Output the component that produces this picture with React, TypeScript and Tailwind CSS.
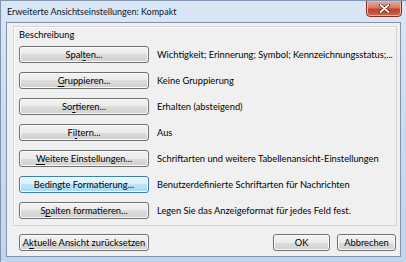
import React from 'react';

const rows: { label: React.ReactNode; desc: string; focus?: boolean }[] = [
  { label: <>Spal<u>t</u>en...</>, desc: 'Wichtigkeit; Erinnerung; Symbol; Kennzeichnungsstatus;...' },
  { label: <><u>G</u>ruppieren...</>, desc: 'Keine Gruppierung' },
  { label: <>So<u>r</u>tieren...</>, desc: 'Erhalten (absteigend)' },
  { label: <>Fi<u>l</u>tern...</>, desc: 'Aus' },
  { label: <><u>W</u>eitere Einstellungen...</>, desc: 'Schriftarten und weitere Tabellenansicht-Einstellungen' },
  { label: <>Bedingte Formatierung...</>, desc: 'Benutzerdefinierte Schriftarten für Nachrichten', focus: true },
  { label: <>S<u>p</u>alten formatieren...</>, desc: 'Legen Sie das Anzeigeformat für jedes Feld fest.' },
];

const Btn = ({
  children,
  w,
  focus,
}: {
  children: React.ReactNode;
  w: string;
  focus?: boolean;
}) => (
  <button
    className={
      focus
        ? `${w} h-[17px] shrink-0 whitespace-nowrap rounded-[3px] border border-[#3c7fb1] bg-[linear-gradient(to_bottom,#eaf6fd_0%,#d9f0fc_50%,#bee6fd_50%,#a7d9f5_100%)] shadow-[inset_0_0_0_1px_#f4fbff] text-center leading-[15px] text-black`
        : `${w} h-[17px] shrink-0 whitespace-nowrap rounded-[3px] border border-[#707070] bg-[linear-gradient(to_bottom,#f2f2f2_0%,#ebebeb_50%,#dddddd_50%,#cfcfcf_100%)] shadow-[inset_0_0_0_1px_#fcfcfc] text-center leading-[15px] text-black`
    }
  >
    {children}
  </button>
);

export default function App() {
  return (
    <div
      className="w-[406px] h-[262px] flex flex-col bg-[linear-gradient(to_bottom,#dbe7f5_0%,#cddcef_40%,#c3d5ec_100%)] border-l border-t border-[#7f95b0] text-[9.3px] text-black overflow-hidden [&_u]:underline-offset-[1.5px]"
      style={{ fontFamily: 'Lato, "Noto Sans", sans-serif' }}
    >
      <div className="h-[21px] flex items-start justify-between pl-[6px]">
        <span className="mt-[4px] text-[9px] leading-[13px] text-[#0a1626]">
          Erweiterte Ansichtseinstellungen: Kompakt
        </span>
        <div className="w-[36px] h-[17px] mr-[4px] -mt-px rounded-b-[4px] border border-[#7b2f25] bg-[linear-gradient(to_bottom,#e9a99b_0%,#d47a67_45%,#c0402b_55%,#cf6450_100%)] shadow-[inset_0_0_0_1px_#f1b5a8] flex items-center justify-center">
          <svg width="11" height="9" viewBox="0 0 11 9">
            <path d="M1.5 1 L9.5 8 M9.5 1 L1.5 8" stroke="#5a1a10" strokeWidth="3.2" strokeLinecap="round" />
            <path d="M1.5 1 L9.5 8 M9.5 1 L1.5 8" stroke="#ffffff" strokeWidth="1.8" strokeLinecap="round" />
          </svg>
        </div>
      </div>
      <div className="flex-1 ml-[5px] mr-[5px] mb-[5px] border border-[#8294ad] bg-[#f0f0f0] flex flex-col">
        <div className="ml-[6px] mt-[3px] w-[384px] h-[200px] border border-[#d5d5d5] shadow-[inset_1px_1px_0_#ffffff] pl-[5px] flex flex-col">
          <div className="leading-[14px] mt-[1px]">Beschreibung</div>
          <div className="mt-[4px] flex flex-col gap-[9px]">
            {rows.map((r, i) => (
              <div key={i} className="flex items-center">
                <Btn w="w-[130px]" focus={r.focus}>
                  {r.label}
                </Btn>
                <span className="ml-[8px] leading-[15px] whitespace-nowrap">{r.desc}</span>
              </div>
            ))}
          </div>
        </div>
        <div className="mt-[8px] ml-[12px] flex items-center">
          <Btn w="w-[130px]">
            A<u>k</u>tuelle Ansicht zurücksetzen
          </Btn>
          <div className="ml-[124px] flex gap-[7px]">
            <Btn w="w-[57px]">OK</Btn>
            <Btn w="w-[59px]">Abbrechen</Btn>
          </div>
        </div>
      </div>
    </div>
  );
}
